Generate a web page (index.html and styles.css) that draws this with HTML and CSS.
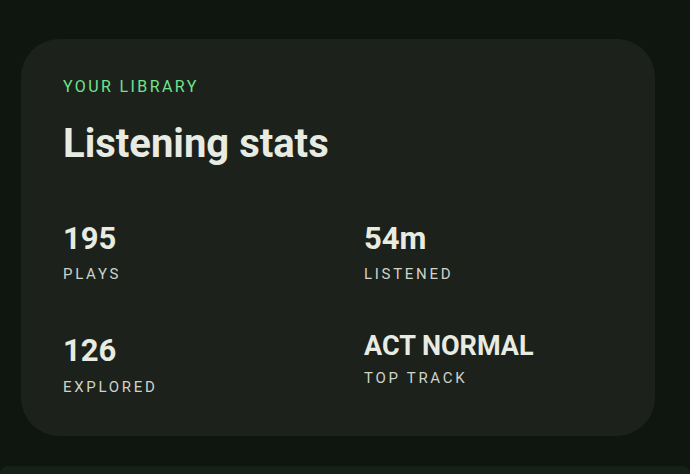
FILE: index.html
```html
<!DOCTYPE html>
<html lang="en">
<head>
    <meta charset="UTF-8">
    <meta name="viewport" content="width=device-width, initial-scale=1.0">
    <title>Listening stats</title>
    <link rel="stylesheet" href="styles.css">
</head>
<body>
<!-- Thống kê nghe nhạc -->
<div class="the-thong-ke">
    <p class="nhan-tren">YOUR LIBRARY</p>
    <h1 class="tieu-de">Listening stats</h1>
    <div class="luoi-so">
        <div class="o-so">
            <div class="gia-tri">195</div>
            <div class="nhan">PLAYS</div>
        </div>
        <div class="o-so">
            <div class="gia-tri">54m</div>
            <div class="nhan">LISTENED</div>
        </div>
        <div class="o-so">
            <div class="gia-tri">126</div>
            <div class="nhan">EXPLORED</div>
        </div>
        <div class="o-so">
            <div class="gia-tri nho">ACT NORMAL</div>
            <div class="nhan">TOP TRACK</div>
        </div>
    </div>
</div>

<div class="the-tiep"></div>
</body>
</html>
```

FILE: styles.css
```css
body {
    font-family: Roboto, "Liberation Sans", sans-serif;
    background-color: #0f150f;
    margin: 0;
    padding-top: 39px;
    overflow: hidden;
}

.the-thong-ke {
    background-color: #1c211c;
    margin: 0 35px 0 21px;
    border-radius: 38px;
    padding: 38px 42px 40px;
}

.nhan-tren {
    margin: 0;
    color: #72e38c;
    font-size: 16px;
    line-height: 1.2;
    letter-spacing: 2.4px;
}

.tieu-de {
    margin: 24px 0 0;
    color: #e8ebe2;
    font-size: 40px;
    line-height: 1.2;
    font-weight: 700;
}

.luoi-so {
    display: grid;
    grid-template-columns: 1fr 1fr;
    column-gap: 52px;
    row-gap: 49px;
    margin-top: 52px;
}

.gia-tri {
    color: #e8ebe2;
    font-size: 31px;
    line-height: 1.2;
    font-weight: 700;
}

.gia-tri.nho {
    font-size: 27px;
    line-height: 29px;
}

.nhan {
    margin-top: 8px;
    color: #cfd3c8;
    font-size: 15px;
    line-height: 1.2;
    letter-spacing: 2.7px;
}

.the-tiep {
    background-color: #152117;
    margin-top: 30px;
    height: 8px;
    border-radius: 24px 24px 0 0;
}
```
